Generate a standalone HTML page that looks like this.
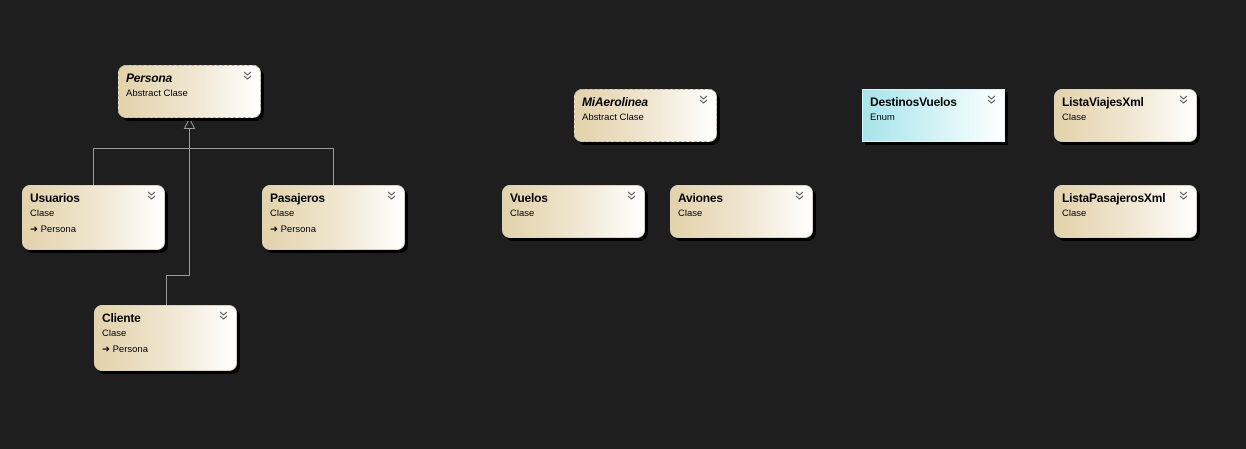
<!DOCTYPE html>
<html><head><meta charset="utf-8"><style>
html,body{margin:0;padding:0;}
body{width:1246px;height:449px;background:#1e1e1e;position:relative;overflow:hidden;font-family:"Liberation Sans",sans-serif;}
.b{position:absolute;width:143px;border:1px solid #d8d2c0;border-radius:8px;box-sizing:border-box;
background:linear-gradient(90deg,#e3d2aa 0%,#efe5cf 50%,#ffffff 100%);box-shadow:3px 3px 0 #000;color:#000;}
.b.abs{border:1px dashed #bdb7a8;}
.b.en{border-radius:0;background:linear-gradient(90deg,#a6e4ec 0%,#d2f2f5 50%,#ffffff 100%);border-color:#e0f4f6;}
.t{position:absolute;left:7px;top:5px;font-size:12px;font-weight:bold;letter-spacing:-0.2px;}
.abs .t{font-style:italic;}
.s{position:absolute;left:7px;top:22px;font-size:9.5px;}
.p{position:absolute;left:7px;top:38px;font-size:9.5px;}
.c{position:absolute;right:8px;top:5px;}
</style></head><body>
<svg width="1246" height="449" style="position:absolute;left:0;top:0">
<g stroke="#9a9a9a" stroke-width="1" fill="none">
<path d="M189.5 128 V275.5 H166.5 V305"/>
<path d="M93.5 185 V148.5 H333.5 V185"/>
<path d="M189.5 118.5 L184.5 128.5 H194.5 Z" fill="#1e1e1e"/>
</g></svg>

<div class="b abs" style="left:118px;top:65px;height:53px"><div class="t">Persona</div><div class="s">Abstract Clase</div><svg class="c" width="9" height="9"><path d="M1 1l3.5 3 3.5-3M1 5l3.5 3 3.5-3" stroke="#666" fill="none" stroke-width="1.2"/></svg></div>

<div class="b" style="left:22px;top:185px;height:65px"><div class="t">Usuarios</div><div class="s">Clase</div><div class="p">➔ Persona</div><svg class="c" width="9" height="9"><path d="M1 1l3.5 3 3.5-3M1 5l3.5 3 3.5-3" stroke="#666" fill="none" stroke-width="1.2"/></svg></div>

<div class="b" style="left:262px;top:185px;height:65px"><div class="t">Pasajeros</div><div class="s">Clase</div><div class="p">➔ Persona</div><svg class="c" width="9" height="9"><path d="M1 1l3.5 3 3.5-3M1 5l3.5 3 3.5-3" stroke="#666" fill="none" stroke-width="1.2"/></svg></div>

<div class="b" style="left:94px;top:305px;height:66px"><div class="t">Cliente</div><div class="s">Clase</div><div class="p">➔ Persona</div><svg class="c" width="9" height="9"><path d="M1 1l3.5 3 3.5-3M1 5l3.5 3 3.5-3" stroke="#666" fill="none" stroke-width="1.2"/></svg></div>

<div class="b abs" style="left:574px;top:89px;height:53px"><div class="t">MiAerolinea</div><div class="s">Abstract Clase</div><svg class="c" width="9" height="9"><path d="M1 1l3.5 3 3.5-3M1 5l3.5 3 3.5-3" stroke="#666" fill="none" stroke-width="1.2"/></svg></div>

<div class="b en" style="left:862px;top:89px;height:53px"><div class="t">DestinosVuelos</div><div class="s">Enum</div><svg class="c" width="9" height="9"><path d="M1 1l3.5 3 3.5-3M1 5l3.5 3 3.5-3" stroke="#666" fill="none" stroke-width="1.2"/></svg></div>

<div class="b" style="left:1054px;top:89px;height:53px"><div class="t">ListaViajesXml</div><div class="s">Clase</div><svg class="c" width="9" height="9"><path d="M1 1l3.5 3 3.5-3M1 5l3.5 3 3.5-3" stroke="#666" fill="none" stroke-width="1.2"/></svg></div>

<div class="b" style="left:502px;top:185px;height:53px"><div class="t">Vuelos</div><div class="s">Clase</div><svg class="c" width="9" height="9"><path d="M1 1l3.5 3 3.5-3M1 5l3.5 3 3.5-3" stroke="#666" fill="none" stroke-width="1.2"/></svg></div>

<div class="b" style="left:670px;top:185px;height:53px"><div class="t">Aviones</div><div class="s">Clase</div><svg class="c" width="9" height="9"><path d="M1 1l3.5 3 3.5-3M1 5l3.5 3 3.5-3" stroke="#666" fill="none" stroke-width="1.2"/></svg></div>

<div class="b" style="left:1054px;top:185px;height:53px"><div class="t">ListaPasajerosXml</div><div class="s">Clase</div><svg class="c" width="9" height="9"><path d="M1 1l3.5 3 3.5-3M1 5l3.5 3 3.5-3" stroke="#666" fill="none" stroke-width="1.2"/></svg></div>
</body></html>
